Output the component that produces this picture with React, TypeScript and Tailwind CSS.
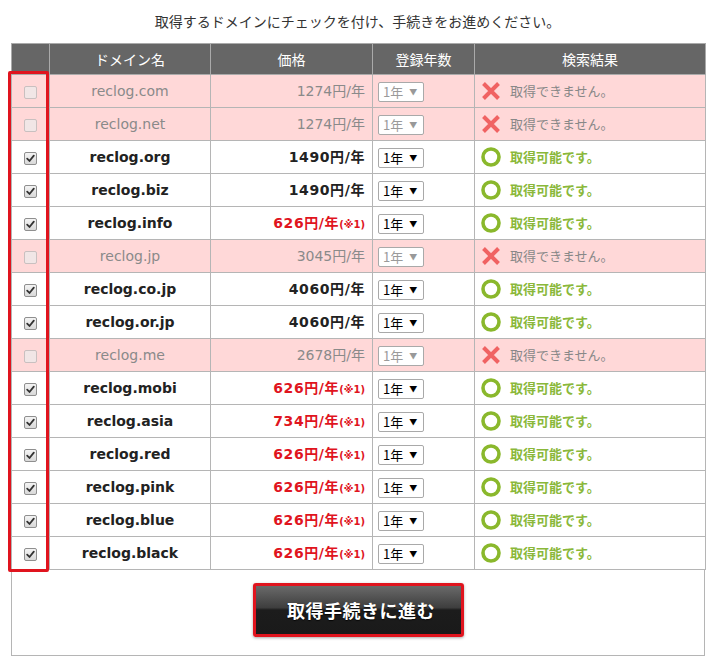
type Row = {
  domain: string;
  price: string;
  ok: boolean;
  campaign?: boolean;
};

const rows: Row[] = [
  { domain: "reclog.com", price: "1274", ok: false },
  { domain: "reclog.net", price: "1274", ok: false },
  { domain: "reclog.org", price: "1490", ok: true },
  { domain: "reclog.biz", price: "1490", ok: true },
  { domain: "reclog.info", price: "626", ok: true, campaign: true },
  { domain: "reclog.jp", price: "3045", ok: false },
  { domain: "reclog.co.jp", price: "4060", ok: true },
  { domain: "reclog.or.jp", price: "4060", ok: true },
  { domain: "reclog.me", price: "2678", ok: false },
  { domain: "reclog.mobi", price: "626", ok: true, campaign: true },
  { domain: "reclog.asia", price: "734", ok: true, campaign: true },
  { domain: "reclog.red", price: "626", ok: true, campaign: true },
  { domain: "reclog.pink", price: "626", ok: true, campaign: true },
  { domain: "reclog.blue", price: "626", ok: true, campaign: true },
  { domain: "reclog.black", price: "626", ok: true, campaign: true },
];

const jp = "font-['Meiryo','Noto_Sans_CJK_JP',sans-serif]";
const latin = "font-['DejaVu_Sans','Noto_Sans_CJK_JP',sans-serif]";

function CheckBox({ checked }: { checked: boolean }) {
  if (!checked) {
    return (
      <span className="inline-block h-[13px] w-[13px] rounded-[2px] border border-[#c9c0c0] bg-[#f1e6e6] align-middle" />
    );
  }
  return (
    <span className="inline-flex h-[13px] w-[13px] items-center justify-center rounded-[2px] border border-[#8f8f8f] bg-gradient-to-b from-[#f4f4f4] to-[#d8d8d8] align-middle">
      <svg width="9" height="9" viewBox="0 0 9 9">
        <path d="M1.2 4.6 L3.5 7 L7.8 1.6" fill="none" stroke="#333" strokeWidth="1.8" strokeLinecap="round" strokeLinejoin="round" />
      </svg>
    </span>
  );
}

function YearSelect({ disabled }: { disabled: boolean }) {
  return (
    <span
      className={`inline-flex h-[20px] w-[46px] items-center rounded-[2px] border border-[#a9a9a9] bg-white pl-[4px] text-[13px] ${jp} ${
        disabled ? "text-[#9a9a9a]" : "text-black"
      }`}
    >
      <span>1年</span>
      <span className={`ml-[6px] text-[8px] ${disabled ? "text-[#999]" : "text-black"}`}>▼</span>
    </span>
  );
}

function OkIcon() {
  return (
    <svg width="20" height="20" viewBox="0 0 20 20" className="shrink-0">
      <circle cx="10" cy="10" r="8" fill="none" stroke="#8ab82c" strokeWidth="3.6" />
    </svg>
  );
}

function NgIcon() {
  return (
    <svg width="20" height="20" viewBox="0 0 20 20" className="shrink-0">
      <path d="M2.5 2.5 L17.5 17.5 M17.5 2.5 L2.5 17.5" stroke="#f06262" strokeWidth="4" strokeLinecap="butt" />
    </svg>
  );
}

export default function App() {
  return (
    <div className="min-h-[659px] w-[715px] bg-white">
      <p className={`pt-[11px] pb-[12px] text-center text-[14px] leading-[20px] text-[#333] ${jp}`}>
        取得するドメインにチェックを付け、手続きをお進めください。
      </p>

      <div className="relative mx-[11px] w-[694px] border-x border-b border-[#b5b5b5] pb-[18px]">
        <table className="w-[694px] table-fixed border-collapse -ml-px">
          <colgroup>
            <col className="w-[38px]" />
            <col className="w-[161px]" />
            <col className="w-[162px]" />
            <col className="w-[102px]" />
            <col className="w-[231px]" />
          </colgroup>
          <thead>
            <tr className={`h-[31px] bg-[#666] text-[14px] text-white ${jp}`}>
              <th className="border border-[#aaa] font-normal"></th>
              <th className="border border-[#aaa] font-normal">ドメイン名</th>
              <th className="border border-[#aaa] font-normal">価格</th>
              <th className="border border-[#aaa] font-normal">登録年数</th>
              <th className="border border-[#aaa] font-normal">検索結果</th>
            </tr>
          </thead>
          <tbody>
            {rows.map((r) => (
              <tr key={r.domain} className={`h-[33px] ${r.ok ? "bg-white" : "bg-[#ffd8d8]"}`}>
                <td className="border border-[#b5b5b5] text-center">
                  <CheckBox checked={r.ok} />
                </td>
                <td
                  className={`border border-[#b5b5b5] text-center text-[14px] ${latin} ${
                    r.ok ? "font-bold text-[#222]" : "text-[#8a8a8a]"
                  }`}
                >
                  {r.domain}
                </td>
                <td
                  className={`border border-[#b5b5b5] pr-[7px] text-right text-[14px] ${latin} ${
                    !r.ok ? "text-[#8a8a8a]" : r.campaign ? "font-bold tracking-[0.6px] text-[#e0141e]" : "font-bold tracking-[0.6px] text-[#222]"
                  }`}
                >
                  {r.price}円/年
                  {r.campaign && <span className="text-[10px] font-bold tracking-normal text-[#e0141e]">(※1)</span>}
                </td>
                <td className="border border-[#b5b5b5] pl-[5px]">
                  <YearSelect disabled={!r.ok} />
                </td>
                <td className="border border-[#b5b5b5] pl-[6px]">
                  <div className={`flex items-center gap-[9px] text-[13px] ${jp}`}>
                    {r.ok ? <OkIcon /> : <NgIcon />}
                    {r.ok ? (
                      <span className="font-bold text-[#8ab83a]">取得可能です。</span>
                    ) : (
                      <span className="text-[#888]">取得できません。</span>
                    )}
                  </div>
                </td>
              </tr>
            ))}
          </tbody>
        </table>

        <div className="mt-[13px] flex justify-center">
          <button
            className={`h-[54px] w-[211px] rounded-[3px] border-[3px] border-[#e0141e] bg-[linear-gradient(to_bottom,#6a6a6a_0%,#3e3e3e_45%,#1c1c1c_50%,#1a1a1a_100%)] pl-[6px] text-[18px] font-bold tracking-[0.5px] text-white shadow-[0_1px_3px_rgba(0,0,0,0.35)] [text-shadow:0_1px_1px_rgba(0,0,0,0.8)] ${jp}`}
          >
            取得手続きに進む
          </button>
        </div>

        {/* 赤枠 (チェック列) */}
        <div className="pointer-events-none absolute left-[-4px] top-[28px] h-[501px] w-[41px] rounded-[2px] border-[3px] border-[#e0141e]" />
      </div>
    </div>
  );
}
